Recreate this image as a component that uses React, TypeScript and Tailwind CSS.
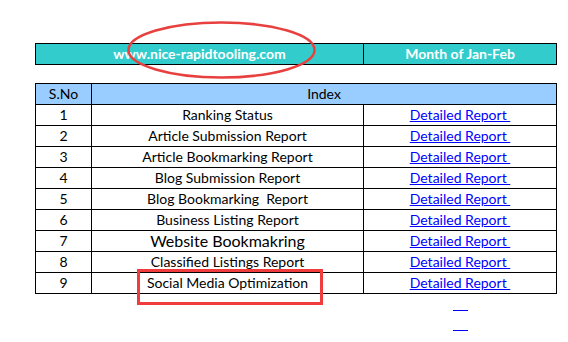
const rows = [
  { n: 1, name: 'Ranking Status' },
  { n: 2, name: 'Article Submission Report' },
  { n: 3, name: 'Article Bookmarking Report' },
  { n: 4, name: 'Blog Submission Report' },
  { n: 5, name: 'Blog Bookmarking  Report' },
  { n: 6, name: 'Business Listing Report' },
  { n: 7, name: 'Website Bookmakring', big: true },
  { n: 8, name: 'Classified Listings Report' },
  { n: 9, name: 'Social Media Optimization' },
];

export default function App() {
  return (
    <div className="relative w-[568px] h-[342px] bg-white text-black font-['Lato','Open_Sans',sans-serif] text-[14px] leading-none">
      <div className="pt-[43px] pl-[35px]">
        {/* Site header */}
        <table className="w-[522px] border-collapse table-fixed">
          <colgroup>
            <col className="w-[328px]" />
            <col />
          </colgroup>
          <tbody>
            <tr className="h-[21px] bg-[#33cccc] text-white font-bold">
              <td className="border border-black text-center p-0">www.nice-rapidtooling.com</td>
              <td className="border border-black text-center p-0">Month of Jan-Feb</td>
            </tr>
          </tbody>
        </table>

        {/* Report index */}
        <table className="mt-[18px] w-[522px] border-collapse table-fixed">
          <colgroup>
            <col className="w-[56px]" />
            <col className="w-[272px]" />
            <col />
          </colgroup>
          <tbody>
            <tr className="h-[21px] bg-[#99ccff]">
              <td className="border border-black text-center p-0">S.No</td>
              <td colSpan={2} className="border border-black text-center p-0">Index</td>
            </tr>
            {rows.map(r => (
              <tr key={r.n} className="h-[21px]">
                <td className="border border-black text-center p-0">{r.n}</td>
                <td className={`border border-black text-center p-0 whitespace-pre ${r.big ? 'text-[16px]' : ''}`}>{r.name}</td>
                <td className="border border-black text-center p-0">
                  <a href="#" className="text-[#0000ff] underline whitespace-pre">Detailed Report </a>
                </td>
              </tr>
            ))}
          </tbody>
        </table>
      </div>

      {/* empty link underlines */}
      <div className="absolute left-[453px] top-[310px] w-[15px] h-px bg-[#0000ff]" />
      <div className="absolute left-[453px] top-[330px] w-[15px] h-px bg-[#0000ff]" />

      {/* annotations */}
      <svg className="absolute left-0 top-0 pointer-events-none" width="568" height="342">
        <ellipse cx="221.5" cy="50" rx="93" ry="27.5" fill="none" stroke="#e8403f" strokeWidth="2.5" />
      </svg>
      <div className="absolute left-[137px] top-[269px] w-[186px] h-[36px] border-[3px] border-[#f03c3c]" />
    </div>
  );
}
